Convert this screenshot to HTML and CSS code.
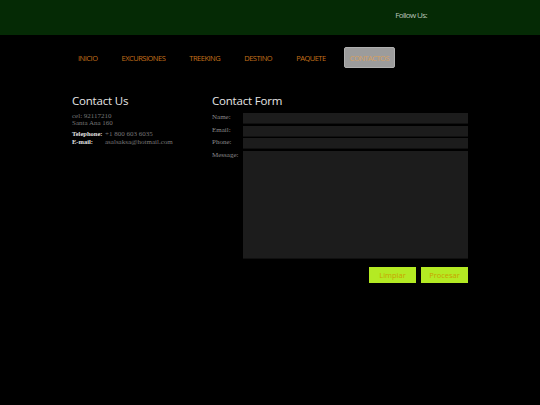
FILE: index.html
```html
<!DOCTYPE html>
<html>
<head>
<meta charset="utf-8">
<link rel="stylesheet" href="styles.css">
</head>
<body>
<header class="top">
  <div class="top-inner">
    <span class="follow">Follow Us:</span>
  </div>
</header>
<div class="wrap">
  <nav class="nav">
    <a class="nav-item">INICIO</a>
    <a class="nav-item">EXCURSIONES</a>
    <a class="nav-item">TREEKING</a>
    <a class="nav-item">DESTINO</a>
    <a class="nav-item">PAQUETE</a>
    <a class="nav-item active">CONTACTOS</a>
  </nav>
  <main class="content">
    <section class="info">
      <h2 class="title">Contact Us</h2>
      <p class="addr">cel: 92117210<br>Santa Ana 160</p>
      <div class="rows">
        <div class="row"><b>Telephone:</b><span>+1 800 603 6035</span></div>
        <div class="row"><b>E-mail:</b><span>asalsaksa@hotmail.com</span></div>
      </div>
    </section>
    <section class="formcol">
      <h2 class="title">Contact Form</h2>
      <form class="form">
        <label>Name:</label><input class="field" type="text">
        <label>Email:</label><input class="field" type="text">
        <label>Phone:</label><input class="field" type="text">
        <label>Message:</label><textarea class="field msg"></textarea>
      </form>
      <div class="buttons">
        <button class="btn">Limpiar</button>
        <button class="btn">Procesar</button>
      </div>
    </section>
  </main>
</div>
</body>
</html>
```
FILE: styles.css
```css
html, body { margin: 0; padding: 0; }
body { background: #000; font-family: "Liberation Serif", serif; color: #888; }
.top { background: #052a05; height: 35px; }
.top-inner { width: 396px; margin: 0 auto; display: flex; justify-content: flex-end; }
.follow { font-family: "Open Sans", sans-serif; font-size: 8px; letter-spacing: -0.6px; color: #b8c4b8; margin-top: 9px; margin-right: 41px; }
.wrap { width: 396px; margin: 0 auto; }
.nav { display: flex; gap: 12px; padding: 12px 0 0 0; height: 21px; align-items: stretch; }
.nav-item { font-family: "Open Sans", sans-serif; font-size: 7.5px; letter-spacing: -0.5px; color: #c4701a; padding: 0 6px; display: flex; align-items: center; border-radius: 2px; }
.nav-item.active { background: #9c9c9c; color: #d8a060; border: 1px solid #b0b0b0; padding: 0 5px; }
.content { display: flex; padding-top: 25px; }
.info { width: 140px; }
.formcol { flex: 1; }
.title { font-family: "Open Sans", sans-serif; font-weight: 400; font-size: 11.5px; letter-spacing: -0.2px; color: #e6e6e6; margin: 0 0 4px 0; line-height: 16px; }
.addr { margin: 0; font-size: 7px; line-height: 7px; color: #777; }
.rows { margin-top: 3px; font-size: 7px; line-height: 8px; }
.row { display: flex; }
.row b { color: #e0e0e0; width: 33px; flex-shrink: 0; font-size: 6.5px; }
.row span { color: #777; white-space: nowrap; }
.form { display: grid; grid-template-columns: 31px 225px; row-gap: 1.5px; }
.form label { font-size: 7px; color: #8a8a8a; line-height: 9px; }
.field { box-sizing: border-box; height: 11px; background: #1c1c1c; border: 0; border-bottom: 1px solid #101010; margin: 0; padding: 0; display: block; }
.msg { height: 108px; resize: none; }
.buttons { display: flex; justify-content: flex-end; gap: 5px; margin-top: 8.5px; }
.btn { width: 47px; height: 16px; background: #b4ea23; border: 0; color: #c8a400; font-family: "Open Sans", sans-serif; font-size: 7.5px; padding: 0; }
```
